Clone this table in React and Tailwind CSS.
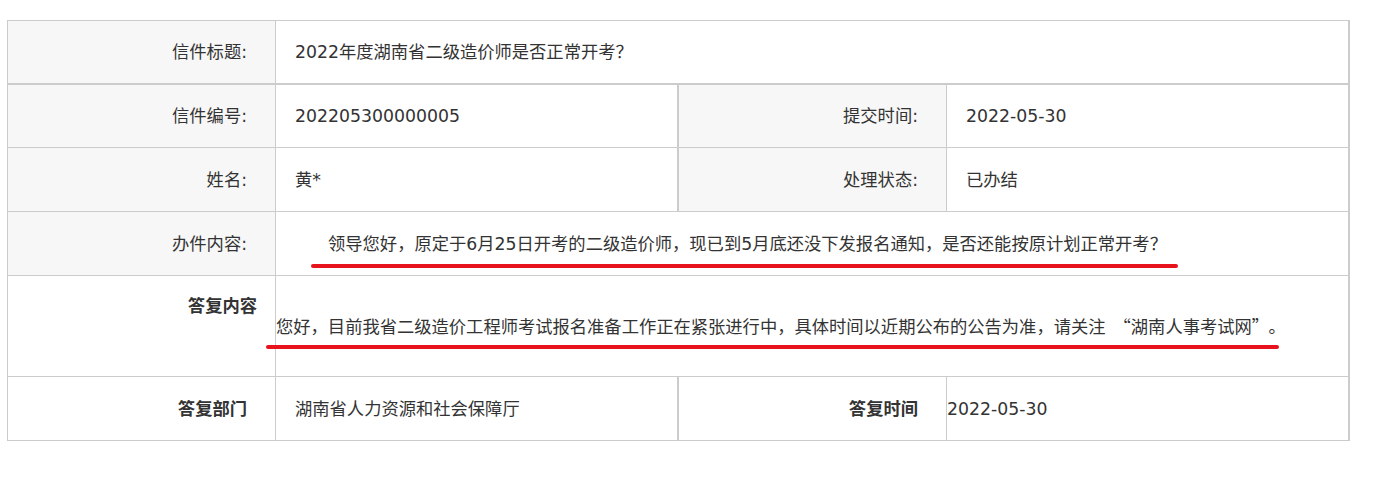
import React from "react";

const LetterDetail = () => {
  return (
    <div className="min-h-screen bg-white pt-[20px] pl-[7px] font-['DejaVu_Sans','Noto_Sans_CJK_SC',sans-serif] text-[17.3px] leading-[24px] text-[#333]">
      <div className="w-[1343px] border-t border-l border-[#ccc]">
        {/* 标题 */}
        <div className="flex h-[64px] border-b-2 border-[#ccc]">
          <div className="w-[268px] border-r border-[#ccc] bg-[#f7f7f7] flex items-center justify-end pr-[28px]">
            信件标题:
          </div>
          <div className="flex-1 border-r-2 border-[#ccc] flex items-center pl-[19px]">
            2022年度湖南省二级造价师是否正常开考？
          </div>
        </div>

        <div className="flex h-[63px] border-b border-[#ccc]">
          <div className="w-[268px] border-r border-[#ccc] bg-[#f7f7f7] flex items-center justify-end pr-[28px]">
            信件编号:
          </div>
          <div className="w-[403px] border-r-2 border-[#ccc] flex items-center pl-[19px]">
            202205300000005
          </div>
          <div className="w-[268px] border-r border-[#ccc] bg-[#f7f7f7] flex items-center justify-end pr-[28px]">
            提交时间:
          </div>
          <div className="w-[403px] border-r-2 border-[#ccc] flex items-center pl-[19px]">
            2022-05-30
          </div>
        </div>

        <div className="flex h-[64px] border-b border-[#ccc]">
          <div className="w-[268px] border-r border-[#ccc] bg-[#f7f7f7] flex items-center justify-end pr-[28px]">
            姓名:
          </div>
          <div className="w-[403px] border-r-2 border-[#ccc] flex items-center pl-[19px]">
            黄*
          </div>
          <div className="w-[268px] border-r border-[#ccc] bg-[#f7f7f7] flex items-center justify-end pr-[28px]">
            处理状态:
          </div>
          <div className="w-[403px] border-r-2 border-[#ccc] flex items-center pl-[19px]">
            已办结
          </div>
        </div>

        {/* 办件内容 */}
        <div className="relative flex h-[64px] border-b border-[#ccc]">
          <div className="w-[268px] border-r border-[#ccc] bg-[#f7f7f7] flex items-center justify-end pr-[28px]">
            办件内容:
          </div>
          <div className="flex-1 border-r-2 border-[#ccc] flex items-center pl-[52px] whitespace-nowrap">
            领导您好，原定于6月25日开考的二级造价师，现已到5月底还没下发报名通知，是否还能按原计划正常开考？
          </div>
          <span className="absolute left-[303px] top-[52px] h-[4px] w-[867px] rounded-full bg-[#e8121c]" />
        </div>

        {/* 答复内容 */}
        <div className="relative flex h-[101px] border-b border-[#ccc]">
          <div className="w-[268px] border-r border-[#ccc] flex justify-end pt-[18px] pr-[18px] font-bold">
            答复内容
          </div>
          <div className="flex-1 border-r-2 border-[#ccc] flex items-center whitespace-nowrap">
            <span>
              您好，目前我省二级造价工程师考试报名准备工作正在紧张进行中，具体时间以近期公布的公告为准，请关注
              <span className="pl-[8px] font-['Noto_Sans_CJK_SC',sans-serif]">“</span>
              湖南人事考试网
              <span className="pr-[8px] font-['Noto_Sans_CJK_SC',sans-serif]">”</span>
              。
            </span>
          </div>
          <span className="absolute left-[258px] top-[69px] h-[4px] w-[1013px] rounded-full bg-[#e8121c]" />
        </div>

        <div className="flex h-[64px] border-b border-[#ccc]">
          <div className="w-[268px] border-r border-[#ccc] flex items-center justify-end pr-[28px] font-bold">
            答复部门
          </div>
          <div className="w-[403px] border-r-2 border-[#ccc] flex items-center pl-[19px]">
            湖南省人力资源和社会保障厅
          </div>
          <div className="w-[268px] border-r border-[#ccc] flex items-center justify-end pr-[28px] font-bold">
            答复时间
          </div>
          <div className="w-[403px] border-r-2 border-[#ccc] flex items-center">
            2022-05-30
          </div>
        </div>
      </div>
    </div>
  );
};

export default function App() {
  return <LetterDetail />;
}
